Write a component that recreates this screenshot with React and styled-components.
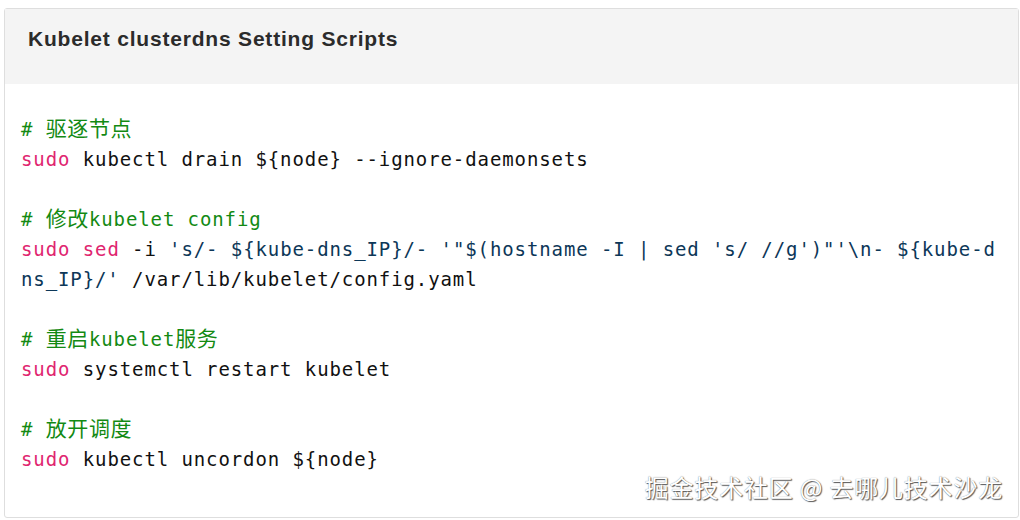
import React from 'react';
import styled, { createGlobalStyle } from 'styled-components';

const Global = createGlobalStyle`
    body {
        margin: 0;
        background: #fff;
    }
`

const Card = styled.div`
    box-sizing: border-box;
    position: relative;
    margin: 8px 1px 2px 4px;
    height: 510px;
    border: 1px solid #dedede;
    border-radius: 3px;
    background: #fff;
    display: flex;
    flex-direction: column;
`

const Header = styled.div`
    box-sizing: border-box;
    height: 75px;
    background: #f4f4f4;
    padding: 18px 23px 0;
    font-family: "Liberation Sans", Arial, sans-serif;
    font-weight: 700;
    font-size: 21px;
    letter-spacing: 0.8px;
    color: #2b2b2b;
`

const Code = styled.pre`
    margin: 0;
    padding: 30px 16px 0 16px;
    width: 982px;
    font-family: "DejaVu Sans Mono", "Noto Sans CJK SC", monospace;
    font-size: 19px;
    letter-spacing: 0.9px;
    line-height: 30px;
    color: #111;
    white-space: pre-wrap;
    word-break: break-all;
`

const Comment = styled.span`
    color: #138a13;
`

const Han = styled.span`
    font-family: "Noto Sans CJK SC", sans-serif;
    font-size: 21px;
    letter-spacing: 0.6px;
    line-height: 26px;
    vertical-align: top;
`

const Keyword = styled.span`
    color: #e0256f;
`

const Str = styled.span`
    color: #0d3758;
`

const Watermark = styled.div`
    position: absolute;
    right: 15px;
    bottom: 13px;
    font-family: "Noto Sans CJK SC", sans-serif;
    font-size: 24px;
    color: #fff;
    letter-spacing: 0.8px;
    text-shadow: 1px 1px 1px #555, 0 0 1px #777;
`

export default function App() {
    return (
        <>
            <Global />
            <Card>
                <Header>Kubelet clusterdns Setting Scripts</Header>
                <Code>
                    <Comment># <Han>驱逐节点</Han></Comment>{'\n'}
                    <Keyword>sudo</Keyword>{' kubectl drain ${node} --ignore-daemonsets\n'}
                    {'\n'}
                    <Comment># <Han>修改</Han>kubelet config</Comment>{'\n'}
                    <Keyword>sudo</Keyword> <Keyword>sed</Keyword>{' -i '}
                    <Str>{`'s/- \${kube-dns_IP}/- '"$(hostname -I | sed 's/ //g')"'\\n- \${kube-dns_IP}/'`}</Str>
                    {' /var/lib/kubelet/config.yaml\n'}
                    {'\n'}
                    <Comment># <Han>重启</Han>kubelet<Han>服务</Han></Comment>{'\n'}
                    <Keyword>sudo</Keyword>{' systemctl restart kubelet\n'}
                    {'\n'}
                    <Comment># <Han>放开调度</Han></Comment>{'\n'}
                    <Keyword>sudo</Keyword>{' kubectl uncordon ${node}'}
                </Code>
                <Watermark>掘金技术社区 @ 去哪儿技术沙龙</Watermark>
            </Card>
        </>
    )
}
